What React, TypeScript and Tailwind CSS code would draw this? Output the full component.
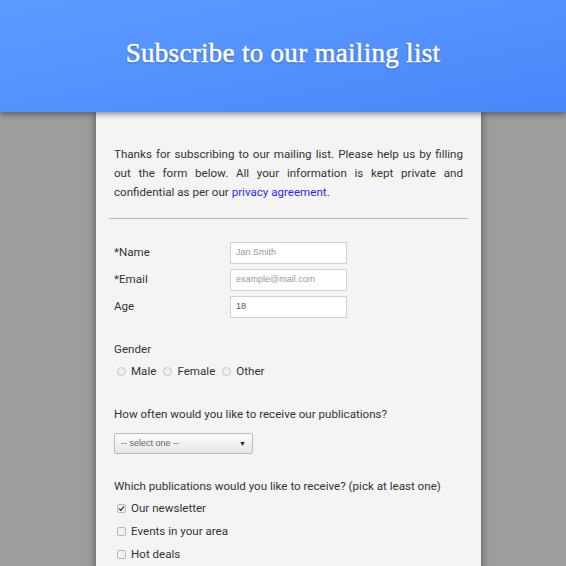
import React from "react";

function Radio({ label }: { label: string }) {
  return (
    <label className="flex items-center">
      <span className="inline-block w-[9px] h-[9px] rounded-full border border-[#c4c4c4] bg-[#f0f0f0] mr-[5px]" />
      <span>{label}</span>
    </label>
  );
}

function Check({ label, checked }: { label: string; checked?: boolean }) {
  return (
    <div className="flex items-center h-[23px]">
      <span className="relative inline-flex items-center justify-center w-[9px] h-[9px] rounded-[2px] border border-[#b8b8b8] bg-[#f2f2f2] mr-[5px]">
        {checked && (
          <svg width="7" height="7" viewBox="0 0 7 7" className="absolute">
            <path d="M1 3.6 L2.8 5.3 L6 1.4" stroke="#333" strokeWidth="1.3" fill="none" />
          </svg>
        )}
      </span>
      <span>{label}</span>
    </div>
  );
}

function Field({ label, value, placeholder }: { label: string; value?: string; placeholder?: string }) {
  return (
    <div className="flex items-center h-[22px]">
      <div className="w-[116px]">{label}</div>
      <div className="w-[117px] h-[22px] border border-[#d2d2d2] bg-white flex items-center px-[5px] text-[9px] font-['Liberation_Sans',Arial,sans-serif]">
        {value ? <span className="text-[#555]">{value}</span> : <span className="text-[#999]">{placeholder}</span>}
      </div>
    </div>
  );
}

export default function App() {
  return (
    <div className="w-[566px] h-[566px] overflow-hidden bg-[#9d9d9d] relative font-['Roboto',sans-serif] text-[11.6px] text-[#333]">
      <div className="relative z-10 h-[112px] bg-gradient-to-br from-[#5c9bff] to-[#4a87fb] flex items-center justify-center shadow-[0_2px_6px_rgba(0,0,0,0.45)]">
        <h1 className="text-white text-[27px] font-['Liberation_Serif',serif] tracking-[0.3px] mt-[-6px] [-webkit-text-stroke:0.5px_white] [text-shadow:0_1px_2px_rgba(0,0,0,0.35)]">
          Subscribe to our mailing list
        </h1>
      </div>
      <div className="w-[385px] ml-[96px] bg-[#f4f4f4] shadow-[0_0_8px_rgba(0,0,0,0.5)] px-[13px] pt-[33px] h-[600px]">
        <p className="px-[5px] leading-[19px] text-justify text-[#333]">
          Thanks for subscribing to our mailing list. Please help us by filling out the form below. All your information is kept private and confidential as per our <a className="text-[#2a2af0]">privacy agreement</a>.
        </p>
        <div className="mt-[16px] border-t border-[#b8b8b8]" />
        <div className="px-[5px] pt-[23px] flex flex-col gap-[5px]">
          <Field label="*Name" placeholder="Jan Smith" />
          <Field label="*Email" placeholder="example@mail.com" />
          <Field label="Age" value="18" />
        </div>
        <div className="px-[5px] mt-[22px] leading-[19px]">
          <div>Gender</div>
          <div className="flex items-center gap-[7px] mt-[3px] pl-[3px]">
            <Radio label="Male" />
            <Radio label="Female" />
            <Radio label="Other" />
          </div>
          <div className="mt-[24px]">How often would you like to receive our publications?</div>
          <div className="mt-[9px] w-[139px] h-[21px] border border-[#bcbcbc] rounded-[2px] bg-gradient-to-b from-[#fdfdfd] to-[#e6e6e6] flex items-center justify-between px-[6px] text-[9px] text-[#666] font-['Liberation_Sans',Arial,sans-serif]">
            <span>-- select one --</span>
            <span className="text-[#222] text-[7px]">▼</span>
          </div>
          <div className="mt-[23px]">Which publications would you like to receive? (pick at least one)</div>
          <div className="mt-[1px] pl-[3px]">
            <Check label="Our newsletter" checked />
            <Check label="Events in your area" />
            <Check label="Hot deals" />
          </div>
        </div>
      </div>
    </div>
  );
}
